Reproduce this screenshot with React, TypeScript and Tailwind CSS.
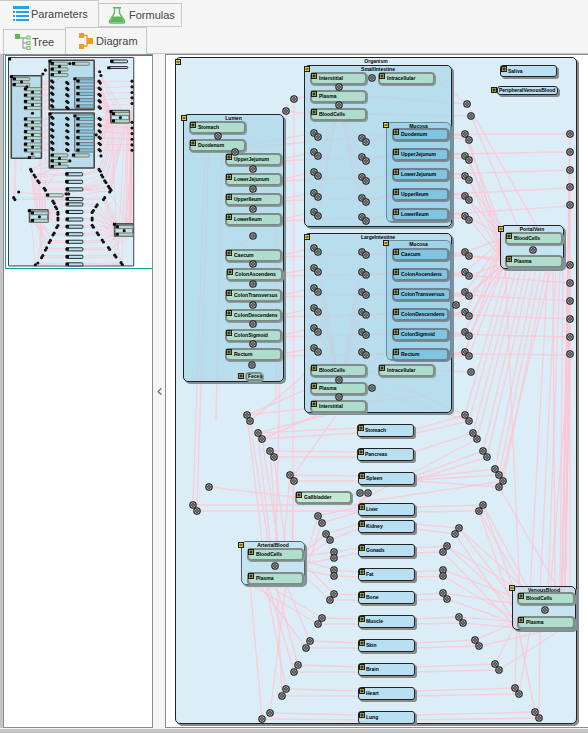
import { ChevronLeft } from 'lucide-react';

type Kind = 'green' | 'blue' | 'organ' | 'pale';
type Seg = [number, number, number, number];

// diagram coordinates are the ones read off the screenshot, offset by the organism box
const OX = 175;
const OY = 57;

const groups = [
  { name: 'Organism', x: 175, y: 57, w: 402, h: 667, cls: 'bg-[#dbeef8] border border-[#222] rounded-[5px] shadow-[2px_2px_0_#8a8a8a]', miniCls: 'bg-[#dbeef8] border-[3px] border-[#333] rounded-[3px]', mx: 175, my: 59 },
  { name: 'SmallIntestine', x: 304, y: 65, w: 148, h: 162, cls: 'bg-[#a9d7ea]/70 border border-[#222] rounded-[5px] shadow-[2px_2px_0_#7f8f98]', miniCls: 'bg-[#a9d7ea]/70 border-[5px] border-[#444] rounded-[4px]', mx: 304, my: 66 },
  { name: 'LargeIntestine', x: 304, y: 233, w: 148, h: 180, cls: 'bg-[#a9d7ea]/70 border border-[#222] rounded-[5px] shadow-[2px_2px_0_#7f8f98]', miniCls: 'bg-[#a9d7ea]/70 border-[5px] border-[#444] rounded-[4px]', mx: 304, my: 234 },
  { name: 'Lumen', x: 183, y: 114, w: 101, h: 268, cls: 'bg-[#a9d7ea]/70 border border-[#222] rounded-[5px] shadow-[2px_2px_0_#7f8f98]', miniCls: 'bg-[#a9d7ea]/70 border-[5px] border-[#444] rounded-[4px]', mx: 181, my: 115 },
  { name: 'Mucosa', x: 386, y: 122, w: 65, h: 100, cls: 'bg-[#88c8e4]/50 border border-[#6b8a99] rounded-[5px] shadow-[1px_1px_0_#7f8f98]', miniCls: 'bg-[#88c8e4]/50 border-[3px] border-[#555] rounded-[4px]', mx: 383, my: 122 },
  { name: 'Mucosa', x: 386, y: 240, w: 65, h: 120, cls: 'bg-[#88c8e4]/50 border border-[#6b8a99] rounded-[5px] shadow-[1px_1px_0_#7f8f98]', miniCls: 'bg-[#88c8e4]/50 border-[3px] border-[#555] rounded-[4px]', mx: 383, my: 240 },
  { name: 'PortalVein', x: 500, y: 225, w: 64, h: 44, cls: 'bg-[#b8dcee]/60 border border-[#222] rounded-[5px] shadow-[2px_2px_0_#7f8f98]', miniCls: 'bg-[#b8dcee]/60 border-[5px] border-[#555] rounded-[4px]', mx: 498, my: 226 },
  { name: 'ArterialBlood', x: 241, y: 541, w: 64, h: 44, cls: 'bg-[#b8dcee]/60 border border-[#4a6472] rounded-[5px] shadow-[2px_2px_0_#7f8f98]', miniCls: 'bg-[#b8dcee]/60 border-[5px] border-[#555] rounded-[4px]', mx: 238, my: 542 },
  { name: 'VenousBlood', x: 512, y: 586, w: 64, h: 44, cls: 'bg-[#b8dcee]/60 border border-[#222] rounded-[5px] shadow-[2px_2px_0_#7f8f98]', miniCls: 'bg-[#b8dcee]/60 border-[5px] border-[#555] rounded-[4px]', mx: 509, my: 585 },
];

const nodes: { name: string; x: number; y: number; w?: number; h?: number; kind: Kind; tx?: number; mx?: number }[] = [
  { name: 'Interstitial', x: 310, y: 72, kind: 'green' },
  { name: 'Intracellular', x: 378, y: 72, kind: 'green' },
  { name: 'Plasma', x: 310, y: 90, kind: 'green' },
  { name: 'BloodCells', x: 310, y: 108, kind: 'green' },
  { name: 'Duodenum', x: 392, y: 128, kind: 'blue' },
  { name: 'UpperJejunum', x: 392, y: 148, kind: 'blue' },
  { name: 'LowerJejunum', x: 392, y: 168, kind: 'blue' },
  { name: 'UpperIleum', x: 392, y: 188, kind: 'blue' },
  { name: 'LowerIleum', x: 392, y: 208, kind: 'blue' },
  { name: 'Stomach', x: 189, y: 121, kind: 'green' },
  { name: 'Duodenum', x: 189, y: 139, kind: 'green' },
  { name: 'UpperJejunum', x: 225, y: 153, kind: 'green' },
  { name: 'LowerJejunum', x: 225, y: 173, kind: 'green' },
  { name: 'UpperIleum', x: 225, y: 193, kind: 'green' },
  { name: 'LowerIleum', x: 225, y: 213, kind: 'green' },
  { name: 'Caecum', x: 225, y: 249, kind: 'green' },
  { name: 'ColonAscendens', x: 226, y: 268, kind: 'green' },
  { name: 'ColonTransversus', x: 225, y: 289, kind: 'green' },
  { name: 'ColonDescendens', x: 225, y: 309, kind: 'green' },
  { name: 'ColonSigmoid', x: 225, y: 329, kind: 'green' },
  { name: 'Rectum', x: 225, y: 348, kind: 'green' },
  { name: 'Feces', x: 245, y: 372, w: 18, h: 9, kind: 'green', tx: 1, mx: -7 },
  { name: 'Caecum', x: 392, y: 248, kind: 'blue' },
  { name: 'ColonAscendens', x: 392, y: 268, kind: 'blue' },
  { name: 'ColonTransversus', x: 392, y: 288, w: 59, kind: 'blue' },
  { name: 'ColonDescendens', x: 392, y: 308, kind: 'blue' },
  { name: 'ColonSigmoid', x: 392, y: 328, kind: 'blue' },
  { name: 'Rectum', x: 392, y: 348, kind: 'blue' },
  { name: 'BloodCells', x: 310, y: 364, kind: 'green' },
  { name: 'Intracellular', x: 378, y: 364, kind: 'green' },
  { name: 'Plasma', x: 310, y: 382, kind: 'green' },
  { name: 'Interstitial', x: 310, y: 400, kind: 'green' },
  { name: 'Saliva', x: 500, y: 65, h: 12, kind: 'organ' },
  { name: 'PeripheralVenousBlood', x: 497, y: 86, w: 61, h: 9, kind: 'organ', tx: 1, mx: -6 },
  { name: 'BloodCells', x: 505, y: 232, w: 58, kind: 'green' },
  { name: 'Plasma', x: 505, y: 255, w: 58, kind: 'green' },
  { name: 'Stomach', x: 357, y: 424, kind: 'organ' },
  { name: 'Pancreas', x: 357, y: 448, kind: 'organ' },
  { name: 'Spleen', x: 358, y: 472, kind: 'organ' },
  { name: 'Gallbladder', x: 295, y: 491, kind: 'pale' },
  { name: 'Liver', x: 358, y: 503, kind: 'organ' },
  { name: 'Kidney', x: 358, y: 520, kind: 'organ' },
  { name: 'Gonads', x: 358, y: 544, kind: 'organ' },
  { name: 'Fat', x: 358, y: 568, kind: 'organ' },
  { name: 'Bone', x: 358, y: 591, kind: 'organ' },
  { name: 'Muscle', x: 358, y: 615, kind: 'organ' },
  { name: 'Skin', x: 358, y: 639, kind: 'organ' },
  { name: 'Brain', x: 358, y: 663, kind: 'organ' },
  { name: 'Heart', x: 358, y: 687, kind: 'organ' },
  { name: 'Lung', x: 358, y: 711, kind: 'organ' },
  { name: 'BloodCells', x: 247, y: 548, kind: 'green' },
  { name: 'Plasma', x: 247, y: 572, kind: 'green' },
  { name: 'BloodCells', x: 517, y: 592, w: 58, kind: 'green' },
  { name: 'Plasma', x: 517, y: 616, w: 58, kind: 'green' },
];

const kindCls: Record<Kind, string> = {
  green: 'bg-[#aedcc8]/90 border-2 border-[#7d8d8a] rounded-[4px] shadow-[1px_1px_0_#8c9a98]',
  pale: 'bg-[#c6e8d2] border-2 border-[#7d8d8a] rounded-[4px] shadow-[1px_1px_0_#8c9a98]',
  blue: 'bg-[#7fc5e2] border-2 border-[#6f8490] rounded-[4px] shadow-[1px_1px_0_#7c8c96]',
  organ: 'bg-[#b8e0f2] border border-[#222] rounded-[3px] shadow-[2px_2px_0_#8a8a8a]',
};

const miniKindCls: Record<Kind, string> = {
  green: 'bg-[#aedcc8] border-[3px] border-[#777] rounded-[3px]',
  pale: 'bg-[#c6e8d2] border-[3px] border-[#777] rounded-[3px]',
  blue: 'bg-[#7fc5e2] border-[3px] border-[#777] rounded-[3px]',
  organ: 'bg-[#b8e0f2] border-[3px] border-[#222] rounded-[4px]',
};

const rows = [0, 1, 2, 3, 4, 5];

const ports: [number, number][] = [
  [294, 99], [286, 111], [339, 87], [339, 105], [372, 78], [339, 380], [339, 397], [372, 388],
  [218, 136], [235, 152], [253, 169], [253, 189], [253, 209], [253, 236],
  [253, 264], [253, 284], [253, 305], [253, 324], [253, 344], [252, 365],
  [467, 104], [471, 116], [456, 305], [471, 372], [533, 250], [275, 566], [545, 610],
  [570, 134], [570, 152], [570, 170], [570, 187], [570, 205],
  [570, 265], [570, 283], [570, 301], [570, 319], [570, 337], [570, 354],
  [247, 415], [250, 421], [258, 433], [262, 439], [270, 451], [274, 457], [290, 475], [294, 481],
  [209, 487], [193, 505], [197, 511], [360, 493], [368, 493],
  [318, 516], [322, 523], [326, 534], [330, 540], [334, 552], [334, 558], [334, 570], [334, 576],
  [334, 594], [330, 600], [322, 618], [318, 624], [310, 641], [306, 648], [298, 665], [294, 672],
  [286, 689], [282, 696], [270, 713], [262, 719],
  [465, 415], [469, 421], [473, 433], [477, 439], [483, 451], [487, 457],
  [495, 469], [499, 475], [503, 481], [499, 487], [483, 505], [479, 511], [459, 528], [455, 534],
  [447, 546], [443, 552], [443, 570], [443, 576], [443, 593], [447, 599], [459, 617], [463, 623],
  [475, 640], [479, 646], [495, 664], [499, 670], [515, 688], [519, 694], [535, 712], [539, 718],
];

const siTop = [133, 152, 172, 193, 212];
const liTop = [248, 268, 288, 308, 328, 348];
siTop.forEach((y) => ports.push([314, y], [318, y + 4], [362, y + 5], [366, y + 9]));
rows.slice(0, 5).forEach((i) => ports.push([465, 136 + i * 20 + (i === 0 ? -2 : 0)], [469, 140 + i * 20]));
liTop.forEach((y) => ports.push([314, y], [318, y + 4], [362, y + 4], [366, y + 7], [465, y + 4], [469, y + 8]));

const lines: Seg[] = [];

// organ -> port -> central blood pool, one pair per organ
const leftPairs: [number, number, number, number, number, number][] = [
  [258, 433, 262, 439, 357, 430],
  [270, 451, 274, 457, 357, 454],
  [290, 475, 294, 481, 358, 478],
  [318, 516, 322, 523, 358, 509],
  [326, 534, 330, 540, 358, 526],
  [334, 552, 334, 558, 358, 550],
  [334, 570, 334, 576, 358, 574],
  [334, 594, 330, 600, 358, 597],
  [322, 618, 318, 624, 358, 621],
  [310, 641, 306, 648, 358, 645],
  [298, 665, 294, 672, 358, 669],
  [286, 689, 282, 696, 358, 693],
  [270, 713, 262, 719, 358, 717],
];
leftPairs.forEach(([ax, ay, bx, by, nx, ny], i) => {
  lines.push([ax, ay, nx, ny - 2], [bx, by, nx, ny + 3]);
  if (ay > 600) {
    lines.push([ax, ay, 286 - (i % 3) * 10, 584], [bx, by, 250 + (i % 4) * 9, 584]);
  } else if (ay > 500) {
    lines.push([ax, ay, 304, 552 + (i % 4) * 4], [bx, by, 304, 558 + (i % 4) * 6]);
  } else {
    lines.push([ax, ay, 270 + i * 7, 541], [bx, by, 278 + i * 7, 541]);
  }
});

const rightPairs: [number, number, number, number, number, number][] = [
  [483, 505, 479, 511, 415, 509],
  [459, 528, 455, 534, 415, 526],
  [447, 546, 443, 552, 415, 550],
  [443, 570, 443, 576, 415, 574],
  [443, 593, 447, 599, 415, 597],
  [459, 617, 463, 623, 415, 621],
  [475, 640, 479, 646, 415, 645],
  [495, 664, 499, 670, 415, 669],
  [515, 688, 519, 694, 415, 693],
  [535, 712, 539, 718, 415, 717],
];
rightPairs.forEach(([ax, ay, bx, by, nx, ny], i) => {
  lines.push([ax, ay, nx, ny - 2], [bx, by, nx, ny + 3]);
  if (ay < 610) {
    lines.push([ax, ay, 517, 598 + (i % 3) * 6], [bx, by, 517, 620 + (i % 3) * 4]);
  } else {
    lines.push([ax, ay, 517, 622], [bx, by, 530 + (i % 4) * 10, 630]);
  }
});

// portal side of the splanchnic organs
const portal: [number, number, number, number][] = [
  [465, 415, 413, 430], [469, 421, 413, 434], [473, 433, 413, 452], [477, 439, 358, 502],
  [483, 451, 415, 476], [487, 457, 415, 480], [495, 469, 415, 478], [499, 475, 415, 480],
  [503, 481, 358, 503], [499, 487, 415, 481],
];
portal.forEach(([ax, ay, nx, ny], i) => {
  lines.push([ax, ay, nx, ny], [ax, ay, 506 + i * 5, 269]);
});
lines.push(
  [499, 487, 560, 592], [483, 505, 530, 592], [479, 511, 525, 592], [459, 528, 528, 592], [447, 546, 520, 590],
  [505, 262, 520, 595], [548, 268, 530, 592], [556, 268, 540, 592], [560, 268, 548, 592], [553, 268, 555, 592], [563, 260, 560, 592],
);

// lumen and gut wall
[159, 179, 199, 219].forEach((y, i) => {
  lines.push([282, y, 314, siTop[i + 1]], [282, y + 2, 392, siTop[i + 1] + 4]);
});
lines.push([246, 145, 314, 133], [246, 148, 392, 134]);
[255, 274, 295, 315, 335, 354].forEach((y, i) => {
  lines.push([282, y, 314, liTop[i]], [282, y + 2, 392, liTop[i] + 6]);
});
siTop.forEach((y, i) => {
  lines.push([318, y + 4, 336, 120], [362, y + 5, 342, 120], [366, y + 9, 392, 134 + i * 20]);
  lines.push([449, 134 + i * 20, 465, y + 3], [449, 137 + i * 20, 469, y + 7], [449, 134 + i * 20, 570, 134 + i * 18]);
  lines.push([465, y + 3, 505, 238], [469, y + 7, 505, 262]);
  lines.push([570, 134 + i * 18, 562, 592]);
});
liTop.forEach((y, i) => {
  lines.push([318, y + 4, 336, 364], [362, y + 4, 342, 377], [366, y + 7, 392, y + 6]);
  lines.push([449, y + 6, 465, y + 4], [449, y + 8, 469, y + 8], [449, y + 6, 570, 265 + i * 18]);
  lines.push([465, y + 4, 505, 238], [469, y + 8, 505, 262]);
  lines.push([570, 265 + i * 18, 565, 592]);
});

lines.push(
  [294, 99, 310, 96], [294, 99, 293, 541], [286, 111, 310, 114], [286, 111, 276, 541],
  [467, 104, 367, 96], [471, 116, 367, 114], [467, 104, 540, 232], [471, 116, 530, 255],
  [435, 78, 467, 104], [471, 372, 435, 370], [456, 305, 505, 262], [456, 305, 310, 402],
  [247, 415, 310, 388], [250, 421, 310, 370], [247, 415, 262, 541], [250, 421, 268, 541],
  [465, 415, 367, 370], [469, 421, 367, 388],
  [209, 487, 295, 497], [193, 505, 358, 505], [197, 511, 358, 511],
  [193, 505, 205, 151], [197, 511, 209, 134], [360, 493, 352, 495], [368, 493, 358, 505],
  [222, 152, 216, 420], [276, 230, 276, 400], [232, 250, 253, 236], [340, 410, 290, 480],
  [430, 395, 247, 415], [340, 405, 262, 439], [370, 403, 258, 433],
  [570, 205, 570, 592], [570, 354, 550, 592],
);

function Marker({ x, y, group, mini }: { x: number; y: number; group?: boolean; mini?: boolean }) {
  if (mini) {
    return <div className="absolute w-[10px] h-[9px] bg-black" style={{ left: x - OX, top: y - OY }} />;
  }
  return (
    <svg className="absolute" width="6" height="6" viewBox="0 0 6 6" style={{ left: x - OX, top: y - OY }}>
      <rect x="0.5" y="0.5" width="5" height="5" fill={group ? '#e4cc46' : '#aaa852'} stroke="#1d1d1d" />
      <line x1="1.5" y1="3" x2="4.5" y2="3" stroke="#111" />
      {!group && <line x1="3" y1="1.5" x2="3" y2="4.5" stroke="#111" />}
    </svg>
  );
}

function Group({ g, mini }: { g: (typeof groups)[number]; mini?: boolean }) {
  return (
    <div
      className={`absolute ${mini ? g.miniCls : g.cls}`}
      style={{ left: g.x - OX, top: g.y - OY, width: g.w, height: g.h }}
    >
      {!mini && <div className="text-center font-bold pt-[1px] truncate">{g.name}</div>}
    </div>
  );
}

function Diagram({ mini }: { mini?: boolean }) {
  return (
    <div className="relative w-[402px] h-[667px] shrink-0 font-['Liberation_Sans',sans-serif] text-[5px] leading-none text-black">
      <Group g={groups[0]} mini={mini} />
      <svg className="absolute left-0 top-0" width="402" height="667" viewBox={`${OX} ${OY} 402 667`}>
        {lines.map(([x1, y1, x2, y2], i) => (
          <line key={i} x1={x1} y1={y1} x2={x2} y2={y2} stroke="#ffc4d2" strokeOpacity="0.75" strokeWidth={mini ? 3 : 1.4} />
        ))}
      </svg>
      {groups.slice(1).map((g) => (
        <Group key={g.name + g.y} g={g} mini={mini} />
      ))}
      {nodes.map((n) => (
        <div
          key={n.name + n.x + n.y}
          className={`absolute flex items-center ${mini ? miniKindCls[n.kind] : kindCls[n.kind]}`}
          style={{ left: n.x - OX, top: n.y - OY, width: n.w ?? 57, height: n.h ?? 13, paddingLeft: n.tx ?? 7 }}
        >
          {!mini && <span className="font-bold whitespace-nowrap">{n.name}</span>}
        </div>
      ))}
      {nodes.map((n) => (
        <Marker key={n.name + n.x + n.y} x={n.x + (n.mx ?? 1)} y={n.y + 1} mini={mini} />
      ))}
      {groups.map((g) => (
        <Marker key={g.name + g.y} x={g.mx} y={g.my} group mini={mini} />
      ))}
      <svg className="absolute left-0 top-0" width="402" height="667" viewBox={`${OX} ${OY} 402 667`}>
        {ports.map(([x, y], i) =>
          mini ? (
            <circle key={i} cx={x} cy={y} r="5" fill="#111" />
          ) : (
            <g key={i}>
              <circle cx={x} cy={y} r="3.2" fill="#a8a8a8" stroke="#1c1c1c" strokeWidth="1.1" />
              <circle cx={x} cy={y} r="1.3" fill="#c8c8c8" stroke="#1c1c1c" strokeWidth="0.9" />
            </g>
          ),
        )}
      </svg>
    </div>
  );
}

function ParametersIcon() {
  return (
    <svg width="17" height="17" viewBox="0 0 17 17">
      <rect x="0" y="0" width="16" height="3" fill="#21a4ec" />
      <rect x="0" y="5" width="2" height="2" fill="#21a4ec" />
      <rect x="3" y="5" width="13" height="2" fill="#21a4ec" />
      <rect x="0" y="9" width="2" height="2" fill="#21a4ec" />
      <rect x="3" y="9" width="13" height="2" fill="#21a4ec" />
      <rect x="0" y="13" width="2" height="2" fill="#21a4ec" />
      <rect x="3" y="13" width="13" height="2" fill="#21a4ec" />
    </svg>
  );
}

function FormulasIcon() {
  return (
    <svg width="18" height="18" viewBox="0 0 18 18">
      <path d="M6.5 2.5 V7 L1.5 15 Q1 17 3 17 H15 Q17 17 16.5 15 L11.5 7 V2.5" fill="none" stroke="#5cb85c" strokeWidth="1.4" />
      <path d="M4.5 10.5 H13.5 L16 16 H2 Z" fill="#5cb85c" />
      <rect x="5" y="1" width="8" height="1.6" fill="#5cb85c" />
    </svg>
  );
}

function TreeIcon() {
  return (
    <svg width="17" height="17" viewBox="0 0 17 17">
      <path d="M5 4 H12 M8 4 V14 H12 M8 9 H12" fill="none" stroke="#a9a9a9" strokeWidth="1.4" />
      <rect x="0" y="0" width="5" height="5" fill="#58c04a" />
      <rect x="12" y="2" width="3" height="3" fill="#e3f4dc" stroke="#72c062" />
      <rect x="12" y="7.5" width="3" height="3" fill="#e3f4dc" stroke="#72c062" />
      <rect x="12" y="12.5" width="3" height="3" fill="#e3f4dc" stroke="#72c062" />
    </svg>
  );
}

function DiagramIcon() {
  return (
    <svg width="14" height="16" viewBox="0 0 14 16">
      <path d="M5 2.5 H8 V13 H5" fill="none" stroke="#f39a1e" strokeWidth="1.4" />
      <rect x="0" y="0" width="5" height="5" fill="#f39a1e" />
      <rect x="0" y="11" width="5" height="5" fill="#f39a1e" />
      <rect x="8" y="5" width="6" height="6" fill="#f39a1e" />
    </svg>
  );
}

export default function App() {
  return (
    <div className="w-[588px] h-[733px] flex flex-col overflow-hidden bg-[#f5f5f5] font-['Liberation_Sans',sans-serif] text-[11px] text-[#444]">
      <div className="h-[27px] flex items-end shrink-0">
        <div className="w-[99px] h-[27px] flex items-center gap-[1px] pl-[13px] border-t border-r border-[#c8c8c8]">
          <ParametersIcon />
          <span>Parameters</span>
        </div>
        <div className="w-[83px] h-[24px] flex items-center gap-[3px] pl-[9px] border-t border-r border-b border-[#c8c8c8]">
          <FormulasIcon />
          <span>Formulas</span>
        </div>
      </div>
      <div className="h-[27px] flex items-end shrink-0 pl-[3px]">
        <div className="w-[62px] h-[25px] flex items-center pl-[11px] border-t border-l border-[#c8c8c8]">
          <TreeIcon />
          <span>Tree</span>
        </div>
        <div className="w-[82px] h-[27px] flex items-center gap-[3px] pl-[13px] border-t border-l border-r border-[#c8c8c8]">
          <DiagramIcon />
          <span>Diagram</span>
        </div>
        <div className="flex-1 border-b border-[#c8c8c8]" />
      </div>
      <div className="flex-1 flex min-h-0">
        <div className="w-[3px] bg-[#c4c4c4] shrink-0" />
        <div className="w-[150px] shrink-0 bg-white border border-[#8c8c8c] pl-px">
          <div className="h-[214px] border-t border-b border-l border-[#169a9a] overflow-hidden pl-[2px] pt-px">
            <div className="origin-top-left scale-[0.314] w-[402px] h-[667px]">
              <Diagram mini />
            </div>
          </div>
        </div>
        <div className="w-[12px] shrink-0 flex items-center justify-center text-[#777]">
          <ChevronLeft size={11} strokeWidth={3} />
        </div>
        <div className="flex-1 bg-white border-t border-l border-b border-[#8c8c8c] overflow-hidden pl-[9px] pt-[2px]">
          <Diagram />
        </div>
      </div>
      <div className="h-[4px] bg-[#c4c4c4] shrink-0 mt-px" />
    </div>
  );
}
